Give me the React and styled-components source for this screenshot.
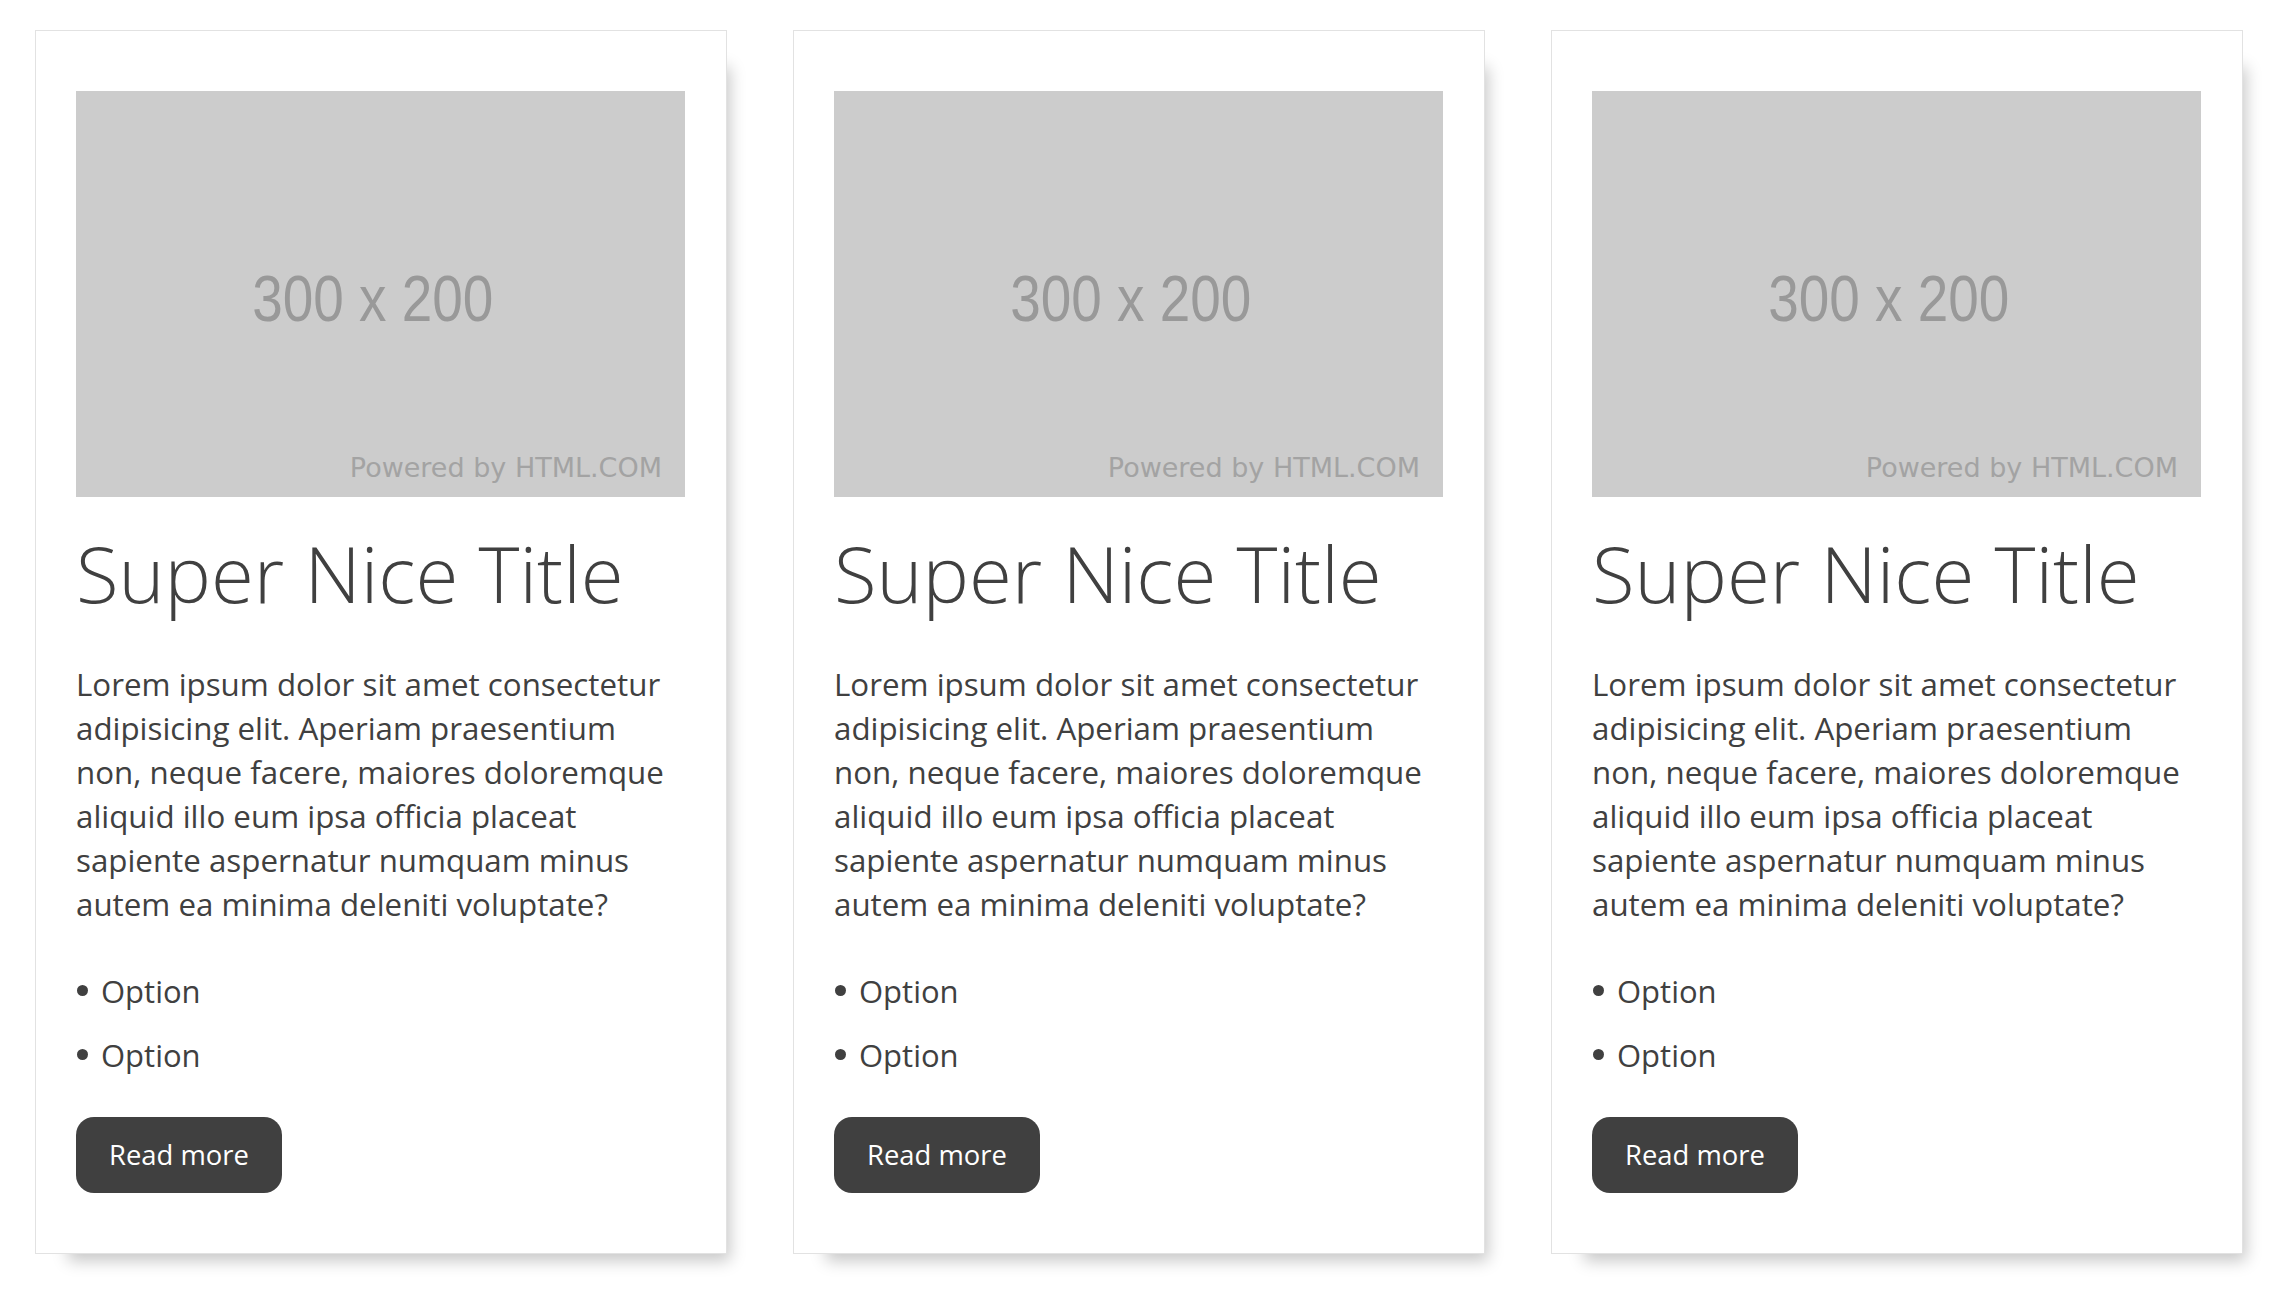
import React from 'react'
import styled, { createGlobalStyle } from 'styled-components'

const GlobalStyle = createGlobalStyle`
  body {
    margin: 0;
    background: #fff;
    font-family: "Open Sans", "Liberation Sans", sans-serif;
    color: #404040;
  }
`

const StyledPage = styled.div`
  display: grid;
  grid-template-columns: repeat(3, 1fr);
  gap: 66px;
  padding: 30px 35px;
`

const StyledCard = styled.div`
  border: 1px solid #e2e2e2;
  background: #fff;
  padding: 60px 41px 60px 40px;
  box-shadow: 18px 22px 15px -15px rgba(0, 0, 0, 0.22);
`

const StyledImage = styled.div`
  position: relative;
  display: flex;
  align-items: center;
  justify-content: center;
  aspect-ratio: 3 / 2;
  background: #cccccc;
`

const StyledSize = styled.span`
  margin: 8px 16px 0 0;
  font-family: "Liberation Sans", Arial, sans-serif;
  font-size: 65px;
  line-height: 1;
  color: #999999;
  transform: scaleX(0.845);
`

const StyledPowered = styled.span`
  position: absolute;
  right: 23px;
  bottom: 16px;
  font-family: "DejaVu Sans", sans-serif;
  font-size: 27px;
  line-height: 1;
  color: #a3a3a3;
`

const StyledTitle = styled.h2`
  margin: 30px 0 0;
  font-size: 78px;
  font-weight: 300;
  line-height: 1.2;
  color: #404040;
`

const StyledText = styled.p`
  margin: 41px 0 0;
  font-size: 31.3px;
  line-height: 44px;
`

const StyledList = styled.ul`
  margin: 43px 0 0;
  padding: 0;
  list-style: none;

  li {
    display: flex;
    align-items: center;
    font-size: 31px;
    line-height: 44px;
  }

  li + li {
    margin-top: 20px;
  }

  li::before {
    content: '';
    width: 11px;
    height: 11px;
    margin: 0 13px 0 1px;
    border-radius: 50%;
    background: #404040;
  }
`

const StyledButton = styled.button`
  margin-top: 40px;
  padding: 19px 33px;
  border: none;
  border-radius: 18px;
  background: #404040;
  color: #fff;
  font-family: "Open Sans", sans-serif;
  font-size: 27.4px;
  line-height: 38px;
  cursor: pointer;
`

const cards = [1, 2, 3]

const Card = () => {
  return (
    <StyledCard>
      <StyledImage>
        <StyledSize>300 x 200</StyledSize>
        <StyledPowered>Powered by HTML.COM</StyledPowered>
      </StyledImage>
      <StyledTitle>Super Nice Title</StyledTitle>
      <StyledText>
        Lorem ipsum dolor sit amet consectetur adipisicing elit. Aperiam
        praesentium non, neque facere, maiores doloremque aliquid illo eum
        ipsa officia placeat sapiente aspernatur numquam minus autem ea minima
        deleniti voluptate?
      </StyledText>
      <StyledList>
        <li>Option</li>
        <li>Option</li>
      </StyledList>
      <StyledButton>Read more</StyledButton>
    </StyledCard>
  )
}

const App = () => {
  return (
    <>
      <GlobalStyle />
      <StyledPage>
        {cards.map((id) => (
          <Card key={id} />
        ))}
      </StyledPage>
    </>
  )
}

export default App
